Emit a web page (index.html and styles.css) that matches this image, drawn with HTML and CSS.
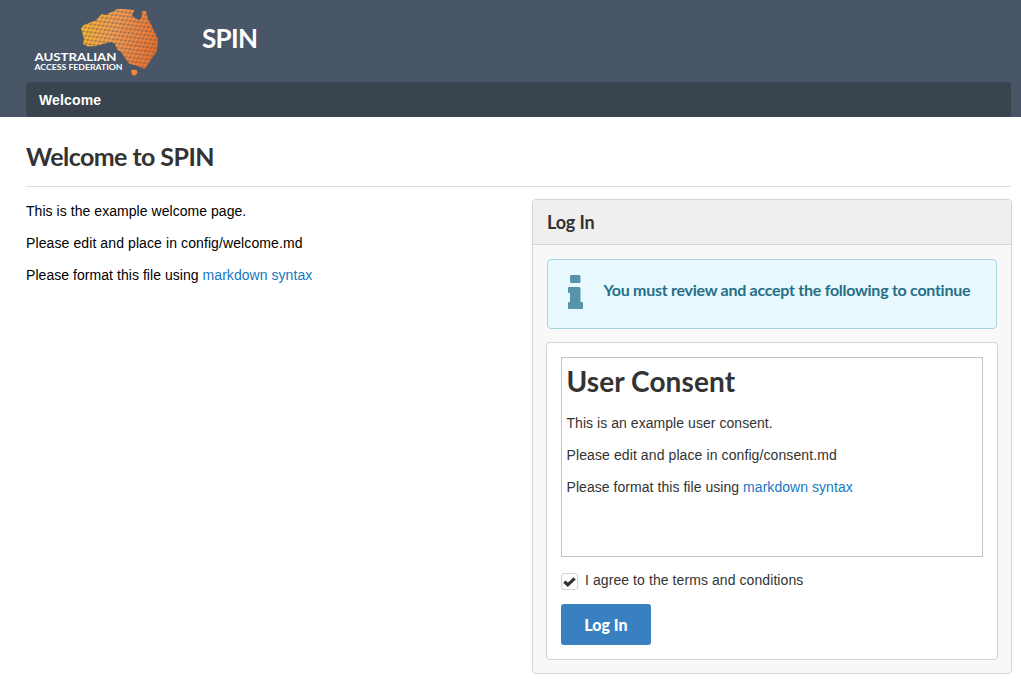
FILE: index.html
```html
<!DOCTYPE html>
<html lang="en">
<head>
<meta charset="utf-8">
<title>SPIN</title>
<link rel="stylesheet" href="styles.css">
</head>
<body>
<header class="banner">
  <div class="brand">
    <svg class="logo" viewBox="26 0 140 82" role="img" aria-label="Australian Access Federation">
      <defs>
        <linearGradient id="heat" gradientUnits="userSpaceOnUse" x1="81" y1="30" x2="157" y2="48">
          <stop offset="0" stop-color="#ffb52c"/>
          <stop offset=".4" stop-color="#fb9d50"/>
          <stop offset="1" stop-color="#f07026"/>
        </linearGradient>
        <pattern id="dots" width="4" height="4" patternUnits="userSpaceOnUse" patternTransform="translate(1 1) rotate(7) skewX(-18)">
          <rect width="4" height="4" fill="#4c4c4c"/>
          <rect x=".2" y=".2" width="3.6" height="3.6" rx="1.2" fill="#fff"/>
        </pattern>
        <mask id="grid" maskUnits="userSpaceOnUse" x="26" y="0" width="140" height="82">
          <path fill="url(#dots)" d="M81 28L84 25 90 22.500 96 20.500 98.500 17 102 14 106 15 109 13 113 11.500 117 9 125 9 134.500 10 132 15.500 135 18 139 20 141.500 17.500 142 11 146 11 148 19.500 150.500 23 153.500 30 157.500 38 158 44 156.500 52 152 58 149 63 144.500 69 137 66 129 63.500 125 58 121 52 117 49.500 115 44 111 42 103 44 96 46 88 46.500 83 44 84 39z"/>
        </mask>
      </defs>
      <rect x="78" y="5" width="84" height="66" fill="url(#heat)" mask="url(#grid)"/>
      <path fill="#f0853f" d="M131 70.500l2-1 4 .8.500 2.700-2.500 2.800-2.900-.9z"/>
      <text class="logo-name" x="34.500" y="61.200" textLength="82" lengthAdjust="spacingAndGlyphs">AUSTRALIAN</text>
      <text class="logo-sub" x="34.500" y="70.300" textLength="88" lengthAdjust="spacingAndGlyphs">ACCESS FEDERATION</text>
    </svg>
    <div class="app-name">SPIN</div>
  </div>
  <nav class="menu"><a class="menu-item">Welcome</a></nav>
</header>
<main class="page">
  <h1 class="page-title">Welcome to SPIN</h1>
  <div class="columns">
    <section class="intro">
      <p>This is the example welcome page.</p>
      <p class="wide">Please edit and place in config/welcome.md</p>
      <p>Please format this file using <a class="link">markdown syntax</a></p>
    </section>
    <section class="panel">
      <h2 class="panel-title">Log In</h2>
      <div class="panel-body">
        <div class="notice">
          <svg class="info" viewBox="0 0 16 34" aria-hidden="true"><path d="M3.500 0h7.500q1.500 0 1.500 1.500v5q0 1.500-1.500 1.500h-7.500q-1.500 0-1.500-1.500v-5q0-1.500 1.500-1.500zM1 12h10q1.500 0 1.500 1.500v13.500h1.500q1 0 1 1v5q0 1-1 1h-13q-1 0-1-1v-5q0-1 1-1h1v-9h-1q-1 0-1-1v-4q0-1 1-1z"/></svg>
          <div class="notice-text">You must review and accept the following to continue</div>
        </div>
        <form class="consent">
          <div class="terms">
            <h1 class="terms-title">User Consent</h1>
            <p>This is an example user consent.</p>
            <p class="wide">Please edit and place in config/consent.md</p>
            <p>Please format this file using <a class="link">markdown syntax</a></p>
          </div>
          <label class="agree">
            <span class="box"><svg class="tick" viewBox="0 0 13 10"><path d="M1.300 4.600l3.500 3.200 6.900-6.400"/></svg></span>
            <span class="agree-text">I agree to the terms and conditions</span>
          </label>
          <button type="button" class="submit">Log In</button>
        </form>
      </div>
    </section>
  </div>
</main>
</body>
</html>
```
FILE: styles.css
```css
* { box-sizing: border-box; }
body { margin: 0; background: #fff; color: #000; font: 14px/18px "Liberation Sans", Arial, sans-serif; }
p { margin: 0 0 14px; letter-spacing: .05px; }
.wide { letter-spacing: .1px; }
.banner { height: 117px; padding: 0 10px 0 26px; background: #495667; }
.brand { display: flex; height: 82px; }
.logo { flex: none; width: 140px; height: 82px; }
.logo-name { font: bold 12px Lato, sans-serif; fill: #fff; }
.logo-sub { font: bold 7.600px Lato, sans-serif; fill: #fff; }
.app-name { margin: 22px 0 0 36px; color: #fff; font: bold 26px/32px Lato, sans-serif; letter-spacing: -.7px; }
.menu { height: 35px; padding: 0 13px; border-radius: 4px 4px 0 4px; background: #3a444f; }
.menu-item { color: #fff; font-weight: bold; line-height: 36px; letter-spacing: .14px; }
.page { padding: 24px 9px 0 26px; }
.page-title { height: 46px; margin: 0 1px 12px 0; border-bottom: 1px solid #dedede; color: #333; font: bold 25px/30px Lato, sans-serif; letter-spacing: -.56px; }
.columns { display: grid; grid-template-columns: 1fr 480px; gap: 26px; }
.intro { padding-top: 3px; }
.link { color: #1678c2; }
.panel { height: 475px; border: 1px solid #d4d4d5; border-radius: 4px; background: #f8f8f8; }
.panel-title { height: 45px; margin: 0; padding: 0 14px; border-bottom: 1px solid #d4d4d5; border-radius: 3px 3px 0 0; background: #efefef; color: #333; font: bold 18px/45px Lato, sans-serif; letter-spacing: -.15px; }
.panel-body { padding: 14px 13px; }
.notice { display: flex; width: 450px; height: 70px; margin: 0 0 13px 1px; padding: 15px 19px 0 20px; border: 1px solid #a5d5df; border-radius: 4px; background: #e7f8fe; }
.info { flex: none; width: 16px; height: 34px; margin-right: 19.500px; fill: #5794aa; }
.notice-text { color: #276f86; font: bold 16px/30px Lato, sans-serif; letter-spacing: -.27px; white-space: nowrap; }
.consent { height: 318px; padding: 14px; border: 1px solid #d4d4d5; border-radius: 4px; background: #fff; color: #333; }
.terms { height: 200px; padding: 7px 5px 0 4.500px; border: 1px solid #c3c3c3; }
.terms-title { margin: -1px 0 16px; color: #333; font: bold 28px/34px Lato, sans-serif; letter-spacing: .1px; }
.agree { display: flex; height: 17px; margin: 16px 0 14px; }
.box { display: flex; align-items: center; justify-content: center; width: 17px; height: 17px; border: 1px solid #d4d4d5; border-radius: 3px; }
.tick { width: 13px; height: 10px; fill: none; stroke: #333; stroke-width: 3.200; }
.agree-text { margin-left: 7px; line-height: 15px; letter-spacing: .08px; }
.submit { display: block; width: 90px; height: 41px; padding: 0; border: 0; border-radius: 3px; background: #3880c0; color: #fff; font: 900 16px/42px Lato, sans-serif; }
```
